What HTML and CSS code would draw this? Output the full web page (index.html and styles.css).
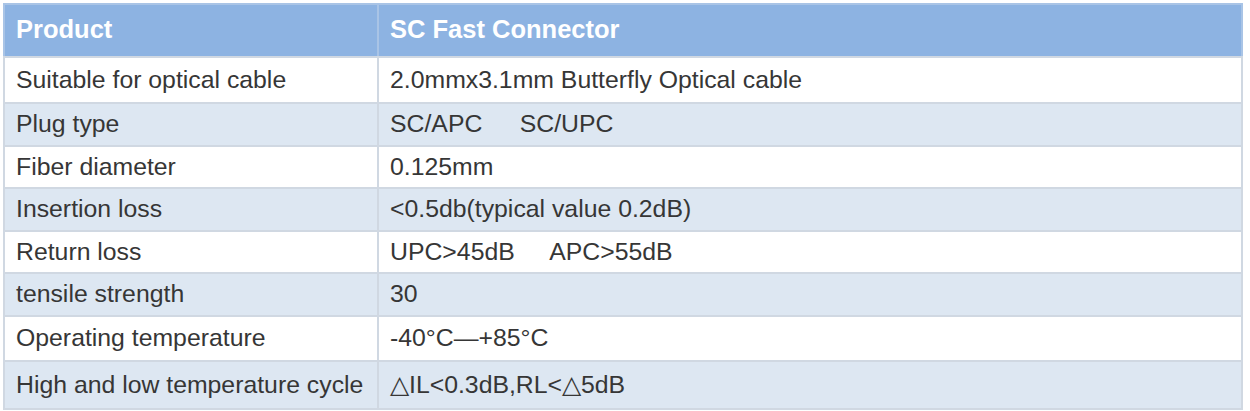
FILE: index.html
```html
<!DOCTYPE html>
<html>
<head>
<meta charset="utf-8">
<link rel="stylesheet" href="styles.css">
</head>
<body>
<table class="spec">
  <colgroup><col class="c1"><col class="c2"></colgroup>
  <thead>
    <tr class="head"><th>Product</th><th>SC Fast Connector</th></tr>
  </thead>
  <tbody>
    <tr class="r1"><td>Suitable for optical cable</td><td>2.0mmx3.1mm Butterfly Optical cable</td></tr>
    <tr><td>Plug type</td><td>SC/APC&nbsp;&nbsp;&nbsp;&nbsp;&nbsp;<span class="nudge">SC/UPC</span></td></tr>
    <tr><td>Fiber diameter</td><td>0.125mm</td></tr>
    <tr><td>Insertion loss</td><td>&lt;0.5db(typical value 0.2dB)</td></tr>
    <tr><td>Return loss</td><td>UPC&gt;45dB&nbsp;&nbsp;&nbsp;&nbsp;&nbsp;APC&gt;55dB</td></tr>
    <tr><td>tensile strength</td><td>30</td></tr>
    <tr class="r7"><td>Operating temperature</td><td>-40°C—+85°C</td></tr>
    <tr class="r8"><td>High and low temperature cycle</td><td>△IL&lt;0.3dB,RL&lt;△5dB</td></tr>
  </tbody>
</table>
</body>
</html>
```
FILE: styles.css
```css
html, body {
  margin: 0;
  padding: 0;
  background: #ffffff;
}
body {
  padding: 3px 7px 0 3px;
  font-family: "Liberation Sans", Arial, sans-serif;
}
.spec {
  width: 1240px;
  border-collapse: collapse;
  border: 1px solid #cdd3da;
  color: #363636;
  font-size: 24.8px;
}
.c1 { width: 374px; }
.spec th, .spec td {
  text-align: left;
  padding: 0 8px 0 11px;
  white-space: nowrap;
  border: 2px solid #d0d8e2;
}
.spec th {
  background: #8db3e2;
  color: #ffffff;
  font-weight: bold;
  font-size: 25.5px;
  height: 48px;
  padding-bottom: 3px;
  border-color: #a9c4e6;
  border-bottom-color: #d0d8e2;
}
.nudge { margin-left: 3px; }
.spec tbody tr { height: 42.5px; }
.spec tbody tr:nth-child(odd) td { background: #ffffff; }
.spec tbody tr:nth-child(even) td { background: #dde7f2; }
.spec tbody tr.r1 { height: 46px; }
.spec tbody tr.r7 { height: 45px; }
.spec tbody tr.r8 { height: 48px; }
```
